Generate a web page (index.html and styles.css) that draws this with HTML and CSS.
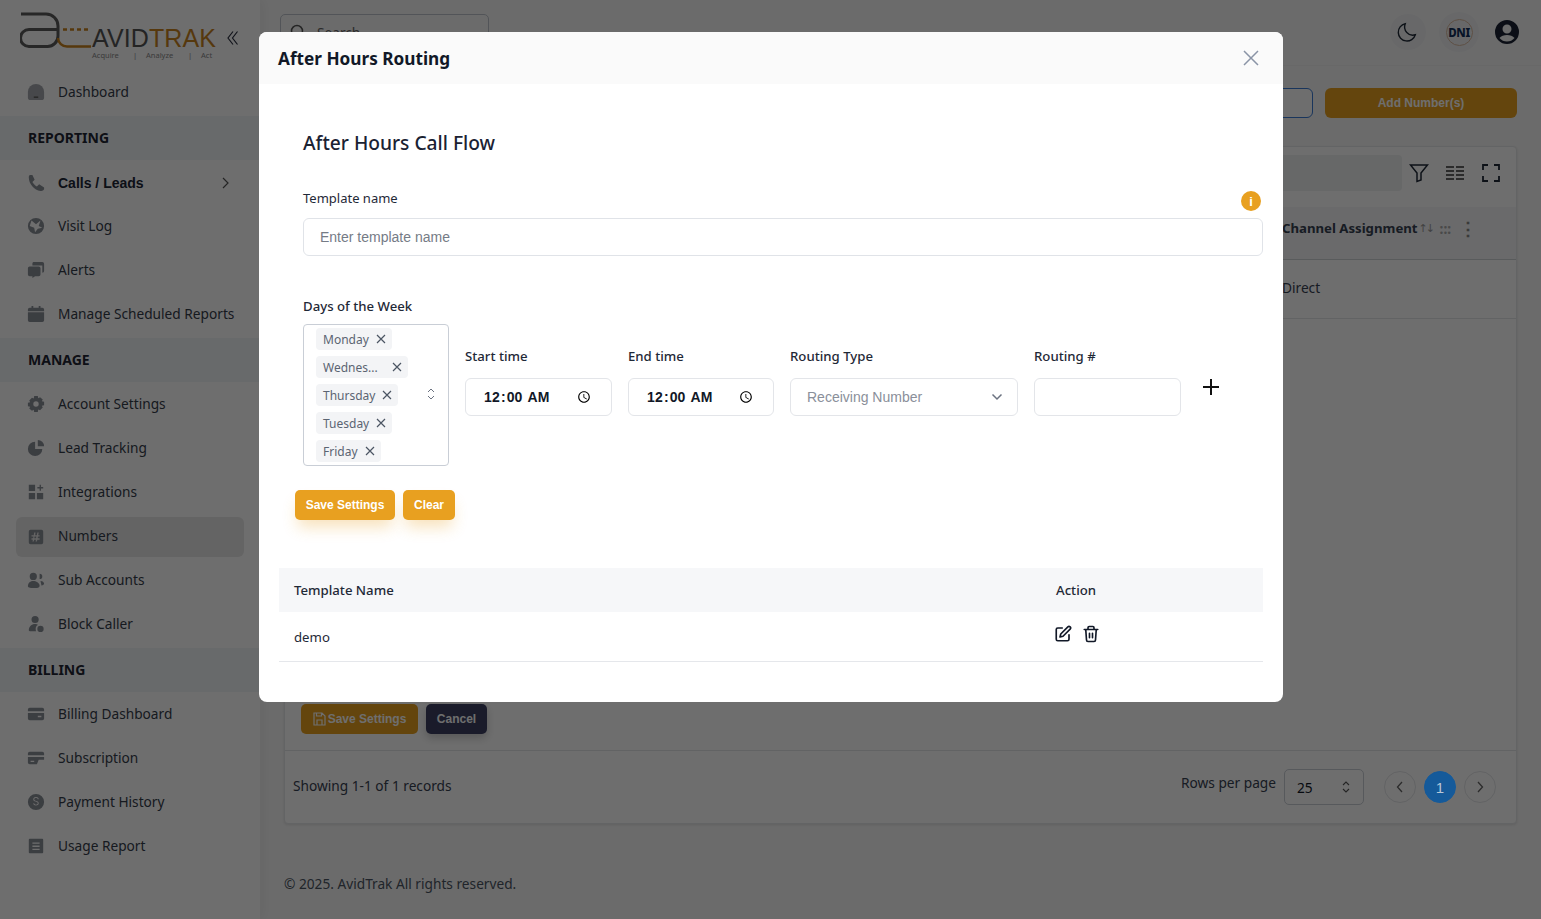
FILE: index.html
```html
<!DOCTYPE html>
<html lang="en">
<head>
<meta charset="utf-8">
<title>After Hours Routing</title>
<link rel="stylesheet" href="styles.css">
</head>
<body>
<div class="app">
  <aside class="sidebar">
    <div class="logo-row">
      <svg class="logo" width="200" height="50" viewBox="0 0 200 50" fill="none">
        <path d="M1 2H26a12 12 0 0 1 12 12V24a10.500 10.500 0 0 1-10.500 10.500H9a8.500 8.500 0 0 1 0-17H38" stroke="#5a5a5a" stroke-width="3"/>
        <path d="M38 26a9 9 0 0 0 9 8.500H71" stroke="#c8831e" stroke-width="2.500"/>
        <path d="M43 17.500H68" stroke="#c8831e" stroke-width="2.500" stroke-dasharray="4 3"/>
        <text x="72" y="35" class="logo-word" fill="#555">AVID<tspan fill="#c8831e">TRAK</tspan></text>
        <text y="46" class="logo-tag" fill="#888"><tspan x="72">Acquire</tspan><tspan x="113">|</tspan><tspan x="126">Analyze</tspan><tspan x="168">|</tspan><tspan x="181">Act</tspan></text>
      </svg>
      <svg class="collapse" width="11" height="16" viewBox="0 0 11 16" fill="none" stroke="#2b3040" stroke-width="1.200"><path d="M6 1.500 1 8l5 6.500M10.500 1.500 5.500 8l5 6.500"/></svg>
    </div>
    <nav>
      <a class="item"><svg class="ic soft" viewBox="0 0 20 20"><path d="M10 1a9 9 0 0 0-9 9v6a3 3 0 0 0 3 3h12a3 3 0 0 0 3-3v-6a9 9 0 0 0-9-9z"/><path class="dark" d="M7.500 15h5v1.500h-5z"/></svg>Dashboard</a>
      <div class="section">REPORTING</div>
      <a class="item strong"><svg class="ic" viewBox="0 0 20 20"><path d="M3 1h3l2.500 5.500L6 9c1 2 3 4 5 5l2.500-2.500L19 15v2c-1 2-3 2-4 2C8 18 2 11 2 4c0-1 0-2 1-3z"/></svg>Calls / Leads<svg class="chev" width="8" height="12" viewBox="0 0 8 12" fill="none" stroke="#555" stroke-width="1.200"><path d="m2 1 5 5-5 5"/></svg></a>
      <a class="item"><svg class="ic" viewBox="0 0 20 20"><path d="M10 1a9 9 0 1 0 0 18 9 9 0 0 0 0-18zM5 4l5 4 5-4-2 6 4 2-5 1-3 4-1-5-5-2z"/></svg>Visit Log</a>
      <a class="item"><svg class="ic" viewBox="0 0 20 20"><path d="M7 1h10a2 2 0 0 1 2 2v8a2 2 0 0 1-2 2V5H6V3a2 2 0 0 1 1-2zM3 6h10a2 2 0 0 1 2 2v7a2 2 0 0 1-2 2H9l-3 2v-2H3a2 2 0 0 1-2-2V8a2 2 0 0 1 2-2z"/></svg>Alerts</a>
      <a class="item"><svg class="ic" viewBox="0 0 20 20"><path d="M5 1h2v2h6V1h2v2h2a2 2 0 0 1 2 2v2H1V5a2 2 0 0 1 2-2h2zM1 8h18v9a2 2 0 0 1-2 2H3a2 2 0 0 1-2-2z"/></svg>Manage Scheduled Reports</a>
      <div class="section">MANAGE</div>
      <a class="item"><svg class="ic" viewBox="0 0 20 20"><path fill-rule="evenodd" d="M8 1h4l.5 2.500 2-1L17.500 5l-1 2 2.500.5v4l-2.500.5 1 2-3 3-2-1L12 19H8l-.5-2.500-2 1L2.500 15l1-2L1 12.500v-4L3.500 8l-1-2 3-3 2 1zM10 7a3 3 0 1 0 0 6 3 3 0 0 0 0-6z"/></svg>Account Settings</a>
      <a class="item"><svg class="ic" viewBox="0 0 20 20"><path d="M9 3v8h8A8 8 0 1 1 9 3zM12 1a7 7 0 0 1 7 7h-7z"/></svg>Lead Tracking</a>
      <a class="item"><svg class="ic" viewBox="0 0 20 20"><path d="M2 2h7v7H2zM2 11h7v7H2zM11 11h7v7h-7zM14 2h1.500v2.500H18V6h-2.500v2.500H14V6h-2.500V4.500H14z"/></svg>Integrations</a>
      <a class="item active"><svg class="ic" viewBox="0 0 20 20"><path fill-rule="evenodd" d="M4 2h12a2 2 0 0 1 2 2v12a2 2 0 0 1-2 2H4a2 2 0 0 1-2-2V4a2 2 0 0 1 2-2zm4 3L7.500 8H5v1.500h2.200l-.3 2H5V13h1.600L6 15h1.500l.5-2h2l-.5 2H11l.5-2H14v-1.500h-2.200l.3-2H14V8h-1.600l.6-3h-1.500l-.5 3h-2l.5-3zm.4 4.500h2l-.3 2h-2z"/></svg>Numbers</a>
      <a class="item"><svg class="ic" viewBox="0 0 20 20"><path d="M7 2a4 4 0 1 1 0 8 4 4 0 0 1 0-8zM14 3a3 3 0 1 1 0 6zM1 17c0-4 3-6 6-6s7 2 7 5-3 3-6 3-7 0-7-2zM15 11c3 0 4 2 4 3s-1 2-3 2c0-2-1-4-1-5z"/></svg>Sub Accounts</a>
      <a class="item"><svg class="ic" viewBox="0 0 20 20"><path d="M9 1a4 4 0 1 1 0 8 4 4 0 0 1 0-8zM2 17c0-4 3-7 7-7 1 0 3 .5 3 1-2 1-3 3-2 7H4c-1 0-2 0-2-1zM15 12a3.500 3.500 0 1 1 0 7 3.500 3.500 0 0 1 0-7z"/></svg>Block Caller</a>
      <div class="section">BILLING</div>
      <a class="item"><svg class="ic" viewBox="0 0 20 20"><path fill-rule="evenodd" d="M3 3h14a2 2 0 0 1 2 2v2H1V5a2 2 0 0 1 2-2zM1 9h18v6a2 2 0 0 1-2 2H3a2 2 0 0 1-2-2zm11 3v1.500h4V12z"/></svg>Billing Dashboard</a>
      <a class="item"><svg class="ic" viewBox="0 0 20 20"><path fill-rule="evenodd" d="M3 3h14a2 2 0 0 1 2 2v2H1V5a2 2 0 0 1 2-2zM1 9h18v3h-6l-2 5H3a2 2 0 0 1-2-2zm3 4v1.500h4V13z"/></svg>Subscription</a>
      <a class="item"><svg class="ic" viewBox="0 0 20 20"><path fill-rule="evenodd" d="M10 1a9 9 0 1 1 0 18 9 9 0 0 1 0-18zm3 6c0-1.500-1.500-2.500-3-2.500S7 5.500 7 7c0 3.500 5 2 5 4.500 0 1-1 1.500-2 1.500s-2-.5-2-1.500H7c0 1.500 1.500 2.500 3 2.500s3-1 3-2.500c0-3.500-5-2-5-4.500 0-1 1-1.500 2-1.500s2 .5 2 1.500z"/></svg>Payment History</a>
      <a class="item"><svg class="ic" viewBox="0 0 20 20"><path fill-rule="evenodd" d="M3 2h14a1 1 0 0 1 1 1v14a1 1 0 0 1-1 1H3a1 1 0 0 1-1-1V3a1 1 0 0 1 1-1zm3 4v1.500h8V6zm0 3.500V11h8V9.500zM6 13v1.500h8V13z"/></svg>Usage Report</a>
    </nav>
  </aside>

  <main class="main">
    <header class="topbar">
      <div class="search"><svg width="16" height="16" viewBox="0 0 16 16" fill="none" stroke="#555" stroke-width="1.500"><circle cx="7" cy="7" r="5.500"/><path d="m11 11 4 4"/></svg><span>Search</span></div>
      <div class="top-actions">
        <span class="round"><svg width="22" height="22" viewBox="0 0 24 24" fill="none" stroke="#1f2937" stroke-width="1.500"><path d="M20 15A9 9 0 0 1 9 3a9.500 9.500 0 1 0 11 12z"/></svg></span>
        <span class="round dni"><span class="dni-in">DNI</span></span>
        <svg width="26" height="26" viewBox="0 0 26 26"><path fill-rule="evenodd" fill="#1a2233" d="M13 1a12 12 0 1 1 0 24 12 12 0 0 1 0-24zm0 4.500a4.500 4.500 0 1 0 0 9 4.500 4.500 0 0 0 0-9zM5.500 19c2 2.500 4.500 3.500 7.500 3.500s5.500-1 7.500-3.500c-1.500-2-4.500-3-7.500-3s-6 1-7.500 3z"/></svg>
      </div>
    </header>
    <div class="actions">
      <button class="btn-outline">Bulk Update</button>
      <button class="btn-add">Add Number(s)</button>
    </div>
    <section class="card">
      <div class="tools">
        <div class="tool-search"></div>
        <svg width="20" height="20" viewBox="0 0 20 20" fill="none" stroke="#1f2937" stroke-width="1.500"><path d="M1.500 2h17l-6.500 8v7l-4 1.500V10z"/></svg>
        <svg width="20" height="20" viewBox="0 0 20 20" fill="none" stroke="#333" stroke-width="1.600"><path d="M1 4h8M1 8h8M1 12h8M1 16h8M11 4h8M11 8h8M11 12h8M11 16h8"/></svg>
        <svg width="20" height="20" viewBox="0 0 20 20" fill="none" stroke="#1f2937" stroke-width="1.800"><path d="M2 7V2h5M13 2h5v5M18 13v5h-5M7 18H2v-5"/></svg>
      </div>
      <div class="thead"><span class="th-name">Channel Assignment</span><span class="sort">↑↓</span><span class="grip">:::</span><span class="kebab">⋮</span></div>
      <div class="trow"><span class="th-cell">Direct</span></div>
      <div class="card-spacer"></div>
      <div class="card-buttons">
        <button class="btn-save"><svg width="13" height="14" viewBox="0 0 13 14" fill="none" stroke="#fff" stroke-width="1.200"><path d="M1 1h8l3 3v9H1zM3.500 1v3h5V1M4 13V8h5v5"/></svg>Save Settings</button>
        <button class="btn-cancel">Cancel</button>
      </div>
      <div class="card-foot">
        <span class="records">Showing 1-1 of 1 records</span>
        <div class="pager">
          <span class="rows-label">Rows per page</span>
          <div class="rows-select">25<svg width="10" height="14" viewBox="0 0 10 14" fill="none" stroke="#555" stroke-width="1.100"><path d="m2 5 3-3 3 3M2 9l3 3 3-3"/></svg></div>
          <span class="page"><svg width="8" height="12" viewBox="0 0 8 12" fill="none" stroke="#666" stroke-width="1.300"><path d="M6 1 1.500 6 6 11"/></svg></span>
          <span class="page current">1</span>
          <span class="page"><svg width="8" height="12" viewBox="0 0 8 12" fill="none" stroke="#666" stroke-width="1.300"><path d="m2 1 4.500 5L2 11"/></svg></span>
        </div>
      </div>
    </section>
    <footer class="copyright">© 2025. AvidTrak All rights reserved.</footer>
  </main>
</div>

<div class="backdrop"></div>

<div class="modal" role="dialog">
  <div class="modal-head">
    <h2>After Hours Routing</h2>
    <svg class="close" width="16" height="16" viewBox="0 0 16 16" fill="none" stroke="#8a94a6" stroke-width="1.500"><path d="m1 1 14 14M15 1 1 15"/></svg>
  </div>
  <div class="modal-body">
    <h3>After Hours Call Flow</h3>
    <div class="name-label-row">
      <label>Template name</label>
      <span class="info">i</span>
    </div>
    <input class="text-input" type="text" placeholder="Enter template name">
    <div class="days-label">Days of the Week</div>
    <div class="flow-row">
      <div class="multi">
        <div class="chips">
          <span class="chip">Monday<svg class="x" viewBox="0 0 10 10"><path d="m1 1 8 8M9 1 1 9"/></svg></span>
          <span class="chip wide">Wednes...<svg class="x" viewBox="0 0 10 10"><path d="m1 1 8 8M9 1 1 9"/></svg></span>
          <span class="chip">Thursday<svg class="x" viewBox="0 0 10 10"><path d="m1 1 8 8M9 1 1 9"/></svg></span>
          <span class="chip">Tuesday<svg class="x" viewBox="0 0 10 10"><path d="m1 1 8 8M9 1 1 9"/></svg></span>
          <span class="chip">Friday<svg class="x" viewBox="0 0 10 10"><path d="m1 1 8 8M9 1 1 9"/></svg></span>
        </div>
        <svg class="updown" width="10" height="14" viewBox="0 0 10 14" fill="none" stroke="#6b7280" stroke-width="1"><path d="m2 5 3-3 3 3M2 9l3 3 3-3"/></svg>
      </div>
      <div class="field w147"><label>Start time</label><input class="control time" type="time" value="00:00"></div>
      <div class="field w146"><label>End time</label><input class="control time" type="time" value="00:00"></div>
      <div class="field w228"><label>Routing Type</label>
        <div class="control select">Receiving Number<svg width="12" height="8" viewBox="0 0 12 8" fill="none" stroke="#6b7280" stroke-width="1.500"><path d="m1.500 1.500 4.500 4.500 4.500-4.500"/></svg></div>
      </div>
      <div class="field w147"><label>Routing #</label><input class="control" type="text"></div>
      <svg class="plus" width="18" height="18" viewBox="0 0 18 18" fill="none" stroke="#111" stroke-width="2"><path d="M9 1v16M1 9h16"/></svg>
    </div>
    <div class="form-buttons">
      <button class="btn-primary save">Save Settings</button>
      <button class="btn-primary clear">Clear</button>
    </div>
  </div>
  <div class="tpl-table">
    <div class="tpl-row tpl-head"><span class="c1">Template Name</span><span class="c2">Action</span></div>
    <div class="tpl-row tpl-data"><span class="c1">demo</span>
      <span class="c2 icons">
        <svg width="18" height="18" viewBox="0 0 24 24" fill="none" stroke="#111827" stroke-width="2.200" stroke-linecap="round" stroke-linejoin="round"><path d="M11 4H5a2 2 0 0 0-2 2v13a2 2 0 0 0 2 2h13a2 2 0 0 0 2-2v-6"/><path d="M18.500 2.500a2.100 2.100 0 0 1 3 3L12 15l-4 1 1-4z"/></svg>
        <svg width="18" height="18" viewBox="0 0 24 24" fill="none" stroke="#111827" stroke-width="2.200" stroke-linecap="round" stroke-linejoin="round"><path d="M3 6h18M8 6V3.500A1.500 1.500 0 0 1 9.500 2h5A1.500 1.500 0 0 1 16 3.500V6M5 6l1 14a2 2 0 0 0 2 2h8a2 2 0 0 0 2-2l1-14M10 11v6M14 11v6"/></svg>
      </span>
    </div>
  </div>
</div>
</body>
</html>
```
FILE: styles.css
```css
* { box-sizing: border-box; }
html, body { margin: 0; height: 100%; overflow: hidden; }
body { font-family: "Noto Sans", "Open Sans", sans-serif; font-size: 13.700px; color: #374151; background: #fff; }
button { font-family: "Liberation Sans", Arial, sans-serif; border: 0; cursor: pointer; }

.app { display: flex; width: 1541px; height: 919px; background: #f8f8f8; }

.sidebar { width: 260px; flex: none; background: #fff; box-shadow: 2px 0 12px rgba(0,0,0,.06); }
.logo-row { height: 70px; display: flex; align-items: flex-start; padding: 12px 0 0 20px; }
.logo { flex: none; }
.logo-word { font-family: "Liberation Sans", sans-serif; font-size: 25px; letter-spacing: .1px; }
.logo-tag { font-family: "Noto Sans", sans-serif; font-size: 7.500px; }
.collapse { margin: 18px 0 0 7px; flex: none; }

.item { height: 44px; display: flex; align-items: center; padding: 0 0 2px 27px; color: #353c4a; font-size: 13.700px; }
.item .ic { width: 18px; height: 18px; margin: 2px 13px 0 0; fill: #8a8f98; flex: none; }
.item .ic.soft { fill: #a5a8ae; }
.item .ic .dark { fill: #555; }
.item.strong { padding: 2px 0 0 27px; font-family: "Liberation Sans", sans-serif; font-size: 14px; font-weight: 700; color: #202636; }
.item.strong .ic { margin-top: 0; }
.item .chev { margin-left: auto; margin-right: 31px; }
.item.active { margin: 3px 16px 1px; padding: 0 0 4px 11px; height: 40px; border-radius: 6px; background: #e8e8e8; }
.item.active .ic { margin-top: 4px; }
.section { height: 44px; margin-top: 2px; display: flex; align-items: center; padding: 0 0 2px 28px; font-weight: 700; font-size: 14px; color: #1f2533; background: #f2f6f8; }

.main { flex: 1; min-width: 0; display: flex; flex-direction: column; }
.topbar { height: 66px; flex: none; display: flex; align-items: flex-start; justify-content: space-between; padding: 14px 21px 0 20px; border-bottom: 1px solid #f0f0f0; }
.search { width: 209px; height: 36px; display: flex; align-items: center; gap: 11px; padding: 0 9px; border: 1px solid #bfc4cc; border-radius: 5px; color: #666; }
.top-actions { display: flex; align-items: center; gap: 14px; height: 36px; }
.round { width: 36px; height: 36px; border-radius: 50%; background: #f1f2f4; display: flex; align-items: center; justify-content: center; }
.dni { width: 40px; height: 40px; margin-left: -1px; margin-right: 1px; }
.dni-in { width: 27px; height: 27px; border-radius: 50%; border: 1px solid #d9b9a0; font-size: 11.500px; font-weight: 800; color: #12305a; display: flex; align-items: center; justify-content: center; letter-spacing: -.3px; }

.actions { display: flex; justify-content: flex-end; gap: 12px; padding: 22px 24px 0 0; flex: none; }
.btn-outline { width: 140px; height: 30px; background: #fff; border: 1px solid #3a7bd5; border-radius: 6px; color: #3a7bd5; font-weight: 700; font-size: 12px; }
.btn-add { width: 192px; height: 30px; background: #e8a020; border-radius: 6px; color: #fff; font-weight: 700; font-size: 12px; }

.card { margin: 28px 24px 0; height: 678px; flex: none; border: 1px solid #e6e7e9; border-radius: 4px; background: #fff; display: flex; flex-direction: column; box-shadow: 0 1px 3px rgba(0,0,0,.1); }
.tools { height: 60px; flex: none; display: flex; align-items: center; gap: 16px; justify-content: flex-end; padding: 0 15px 8px 0; }
.tool-search { width: 300px; height: 36px; background: #eff0f2; border-radius: 4px; margin-right: -9px; }
.thead { height: 53px; flex: none; display: flex; align-items: center; padding: 0 0 10px 997px; background: #f5f6f8; border-bottom: 1px solid #cfd2d6; font-weight: 700; color: #374151; }
.th-name { white-space: nowrap; font-size: 13.200px; }
.sort { font-size: 11px; font-weight: 400; color: #999; width: 16px; margin-left: 1px; white-space: nowrap; font-family: "DejaVu Sans", sans-serif; letter-spacing: -2px; }
.grip { color: #aaa; margin-left: 5px; font-weight: 700; }
.kebab { color: #888; margin-left: 8px; font-size: 18px; }
.trow { height: 59px; flex: none; display: flex; align-items: center; padding: 0 0 3px 997px; border-bottom: 1px solid #e3e5e8; }
.th-cell { color: #374151; }
.card-spacer { flex: 1; }
.card-buttons { flex: none; display: flex; gap: 8px; padding: 0 0 16px 16px; }
.btn-save { width: 117px; height: 30px; background: #e8a020; color: #fff; font-size: 12px; font-weight: 700; border-radius: 5px; display: flex; align-items: center; justify-content: center; gap: 2px; padding: 0; }
.btn-cancel { width: 61px; height: 30px; background: #3c3f63; color: #fff; font-size: 12px; font-weight: 700; border-radius: 5px; box-shadow: 0 4px 8px rgba(0,0,0,.2); }
.card-foot { height: 73px; flex: none; border-top: 1px solid #e3e5e8; display: flex; align-items: center; justify-content: space-between; padding: 0 20px 0 8px; }
.records { margin-bottom: 4px; }
.pager { display: flex; align-items: center; }
.rows-label { margin: 0 8px 10px 0; }
.rows-select { width: 80px; height: 36px; border: 1px solid #c9ced6; border-radius: 5px; display: flex; align-items: center; justify-content: space-between; padding: 0 12px; margin-right: 20px; color: #111827; }
.page { width: 32px; height: 32px; border-radius: 50%; border: 1px solid #e3e5e8; display: flex; align-items: center; justify-content: center; margin-right: 8px; font-family: "Liberation Sans", sans-serif; }
.page:last-child { margin-right: 0; }
.page.current { position: relative; z-index: 1; background: #155a9a; border-color: #155a9a; color: #b9c8d8; font-size: 15px; }
.copyright { margin: 50px 0 0 24px; color: #4b5563; flex: none; }

.backdrop { position: fixed; inset: 0; background: rgba(0,0,0,.57); }

.modal { position: fixed; z-index: 2; left: 259px; top: 32px; width: 1024px; height: 670px; background: #fff; border-radius: 8px; overflow: hidden; color: #1f2937; }
.modal-head { height: 52px; background: #fafafa; display: flex; align-items: center; justify-content: space-between; padding: 0 24px 0 19px; }
.modal-head h2 { margin: 0; font-size: 17.200px; font-weight: 700; color: #111827; }
.modal-body { padding: 0 20px 0 44px; }
.modal-body h3 { margin: 0; padding-top: 45px; height: 94px; line-height: 27px; font-size: 19.200px; font-weight: 500; color: #1a2233; }
.name-label-row { display: flex; justify-content: space-between; align-items: center; height: 40px; }
.name-label-row label { font-size: 13px; }
.info { width: 20px; height: 20px; border-radius: 50%; background: #e8a020; color: #fff; font-family: "Liberation Sans", sans-serif; font-weight: 700; font-size: 13px; display: flex; align-items: center; justify-content: center; margin: 6px 2px 0 0; }
.text-input { width: 960px; height: 38px; display: block; border: 1px solid #e0e3e8; border-radius: 6px; padding: 0 16px; font-family: "Liberation Sans", sans-serif; font-size: 14px; outline: 0; }
.text-input::placeholder { color: #757b86; }
.days-label { margin-top: 40px; height: 28px; line-height: 20px; font-size: 13.200px; font-weight: 500; color: #1f2937; }
.flow-row { display: flex; gap: 16px; align-items: flex-start; }
.multi { width: 146px; height: 142px; flex: none; border: 1px solid #c9ced6; border-radius: 4px; display: flex; align-items: center; padding-left: 12px; position: relative; }
.chips { display: flex; flex-direction: column; align-items: flex-start; gap: 6px; }
.chip { height: 22px; display: inline-flex; align-items: center; gap: 7px; padding: 0 6px 0 7px; border-radius: 4px; background: #f3f4f6; font-size: 12px; color: #5b6472; }
.chip.wide { gap: 14px; }
.x { width: 10px; height: 10px; fill: none; stroke: #4b5563; stroke-width: 1.200; flex: none; }
.updown { position: absolute; right: 12px; top: 62px; }
.field { display: flex; flex-direction: column; gap: 12px; flex: none; margin-top: 22px; }
.field label { font-weight: 500; font-size: 13.200px; line-height: 20px; color: #1f2937; }
.w147 { width: 147px; }
.w146 { width: 146px; }
.w228 { width: 228px; }
.control { height: 38px; width: 100%; border: 1px solid #e3e5e9; border-radius: 6px; background: #fff; outline: 0; font-family: "Liberation Sans", sans-serif; font-size: 14px; }
.time { padding: 0 16px 0 17px; font-weight: 700; letter-spacing: .15px; color: #111827; }
.select { display: flex; align-items: center; justify-content: space-between; padding: 0 14px 0 16px; color: #8a8f9a; }
.plus { margin: 54px 0 0 5px; flex: none; }
.form-buttons { display: flex; gap: 8px; margin: 24px 0 0 -8px; }
.btn-primary { height: 30px; padding: 0; background: #e8a020; color: #fff; font-weight: 700; font-size: 12px; border-radius: 5px; box-shadow: 0 10px 15px -3px rgba(232,160,32,.3); }
.btn-primary.save { width: 100px; }
.btn-primary.clear { width: 52px; }

.tpl-table { margin: 48px 20px 0; width: 984px; font-size: 13.200px; }
.tpl-row { display: flex; align-items: center; }
.tpl-head { height: 44px; background: #f6f7f9; font-weight: 500; color: #1f2937; }
.tpl-data { height: 50px; border-bottom: 1px solid #e5e7eb; color: #1f2937; }
.c1 { width: 777px; padding-left: 15px; flex: none; }
.icons { display: flex; gap: 10px; align-items: center; margin: -6px 0 0 -2px; }
```
